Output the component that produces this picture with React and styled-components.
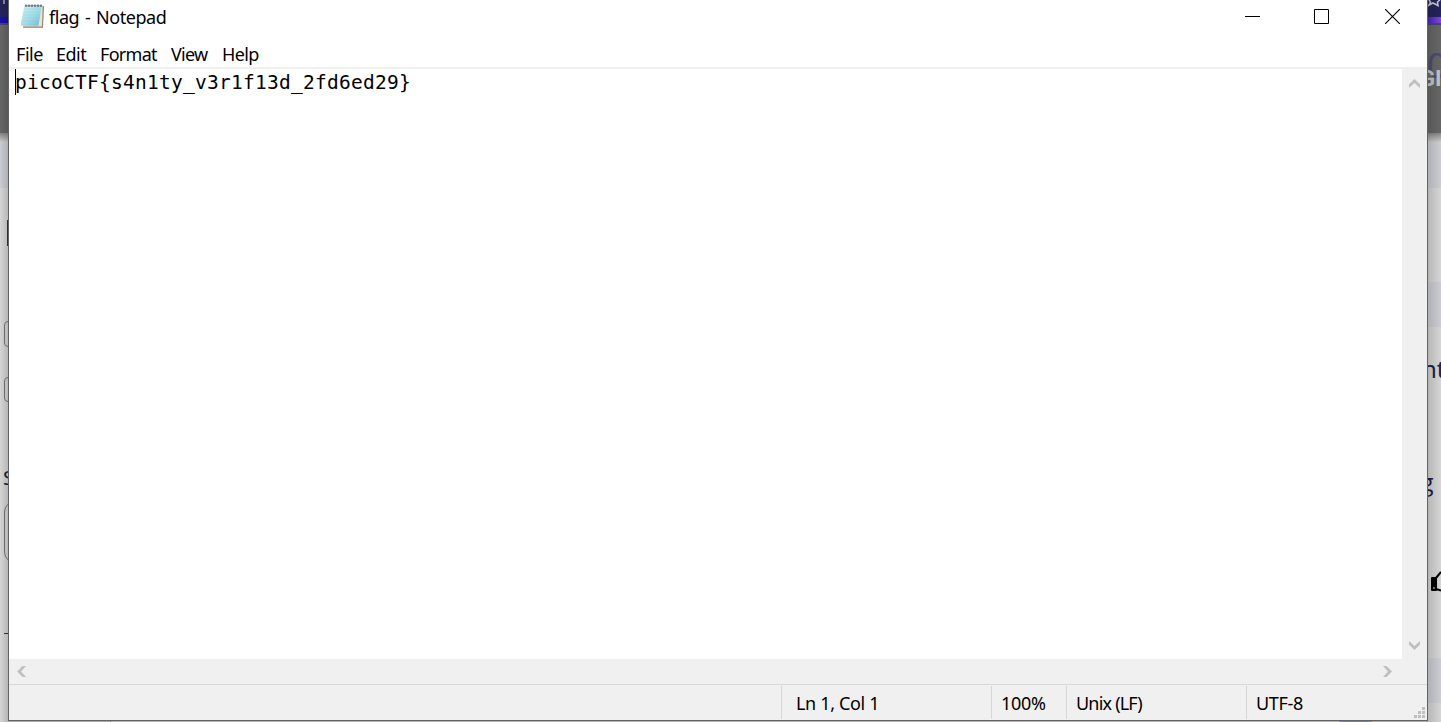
import React from 'react';
import styled, { createGlobalStyle } from 'styled-components';

const Global = createGlobalStyle`
  *, *::before, *::after { box-sizing: border-box; }
  body { margin: 0; overflow: hidden; background: #d3d3d3; }
`;

const ui = `'Noto Sans', 'Open Sans', sans-serif`;

const Desktop = styled.main`
  display: grid;
  grid-template-columns: 8px 1420px 13px;
  width: 1441px;
  height: 722px;
  overflow: hidden;
  font-family: ${ui};
`;

const Strip = styled.aside`
  position: relative;
  display: flex;
  flex-direction: column;
  overflow: hidden;
  background: #d5d5d5;
  &::after {
    content: '';
    position: absolute;
    inset: 0;
    background: linear-gradient(to ${(p) => p.$side}, transparent, rgba(0, 0, 0, 0.14));
  }
`;

const Band = styled.div`
  flex: none;
  height: ${(p) => p.$h}px;
  background: ${(p) => p.$bg || 'transparent'};
`;

const Peek = styled.span`
  position: absolute;
  left: ${(p) => p.$x}px;
  top: ${(p) => p.$y}px;
  color: ${(p) => p.$color || '#1c2145'};
  font-family: ${(p) => p.$font || ui};
  font-size: ${(p) => p.$size}px;
  font-weight: ${(p) => p.$weight || 400};
  line-height: 1;
  white-space: nowrap;
`;

const Outline = styled.span`
  position: absolute;
  left: 4px;
  top: ${(p) => p.$y}px;
  width: 30px;
  height: ${(p) => p.$h}px;
  border: 1px solid #74767c;
  border-radius: ${(p) => p.$r}px;
`;

const Mark = styled.span`
  position: absolute;
  left: ${(p) => p.$x}px;
  top: ${(p) => p.$y}px;
  width: ${(p) => p.$w}px;
  height: ${(p) => p.$h}px;
  background: ${(p) => p.$color || '#33334c'};
`;

const Corner = styled.svg`
  position: absolute;
  left: 0;
  top: 0;
`;

const Thumb = styled.svg`
  position: absolute;
  left: 2px;
  top: 570px;
`;

const Center = styled.div`
  display: flex;
  flex-direction: column;
`;

const Window = styled.section`
  display: flex;
  flex-direction: column;
  height: 721px;
  border: solid #636363;
  border-width: 0 1px 1px;
  background: #fff;
  color: #000;
`;

const Shadow = styled.div`
  height: 1px;
  background: linear-gradient(to right, #aaa 102px, #777 102px 103px, #b5b5b5 103px 1331px, #5790b2 1331px 1364px, #aaa 1364px);
`;

const TitleBar = styled.header`
  display: flex;
  justify-content: space-between;
  height: 37px;
`;

const Title = styled.div`
  display: flex;
  padding-left: 11px;
`;

const TitleText = styled.span`
  padding: 5px 0 0 5px;
  font-size: 18px;
  line-height: 24px;
  letter-spacing: -0.45px;
  word-spacing: 1.5px;
  white-space: nowrap;
`;

const Controls = styled.div`
  display: flex;
  width: 209px;
`;

const Control = styled.button`
  display: flex;
  flex: none;
  width: ${(p) => p.$w}px;
  height: 34px;
  padding: 9px 0 0 ${(p) => p.$pad}px;
  border: 0;
  background: none;
`;

const MenuBar = styled.nav`
  display: flex;
  height: 32px;
  padding: 5px 0 0 7px;
  border-bottom: 2px solid #f0f0f0;
`;

const MenuItem = styled.span`
  flex: none;
  width: ${(p) => p.$w}px;
  font-size: 18px;
  line-height: 24px;
  letter-spacing: ${(p) => p.$ls}px;
  white-space: nowrap;
`;

const Editor = styled.div`
  display: flex;
  height: 590px;
`;

const Document = styled.div`
  position: relative;
  flex: 1;
  padding: 1px 0 0 6px;
  font-family: 'DejaVu Sans Mono', monospace;
  font-size: 19.5px;
  line-height: 26px;
  letter-spacing: 0.26px;
  white-space: pre;
`;

const Caret = styled.span`
  position: absolute;
  left: 6px;
  top: 0;
  width: 1px;
  height: 26px;
  background: #000;
`;

const VScroll = styled.div`
  display: flex;
  flex-direction: column;
  align-items: center;
  justify-content: space-between;
  width: 25px;
  padding: 10px 0 9px;
  background: #f0f0f0;
`;

const HScroll = styled.div`
  display: flex;
  align-items: center;
  justify-content: space-between;
  height: 25px;
  padding: 0 35px 0 8px;
  background: #f0f0f0;
`;

const StatusBar = styled.footer`
  position: relative;
  display: flex;
  justify-content: flex-end;
  height: 36px;
  border-top: 1px solid #d7d7d7;
  background: #f0f0f0;
`;

const Status = styled.div`
  width: ${(p) => p.$w}px;
  height: 33px;
  margin-top: 1px;
  padding: 5px 0 0 ${(p) => p.$pad}px;
  border-left: 1px solid #d7d7d7;
  font-size: 18px;
  line-height: 24px;
  letter-spacing: ${(p) => p.$ls}px;
  white-space: nowrap;
`;

const Grip = styled.svg`
  position: absolute;
  right: 2px;
  bottom: 2px;
`;

function NotepadIcon() {
  return (
    <svg width="24" height="30" viewBox="0 0 24 30">
      <defs>
        <linearGradient id="paper" x1="0" y1="0" x2="1" y2="1">
          <stop offset="0" stopColor="#d8f3f8" />
          <stop offset=".55" stopColor="#a2dbe8" />
          <stop offset="1" stopColor="#69bdd2" />
        </linearGradient>
      </defs>
      <path d="M5 6H24L23 27.8H3Z" fill="#8d8066" />
      <path d="M5 5H22.8L22 26.5H3Z" fill="#e9e3cf" />
      <path d="M4.5 5H21.8L18.5 25.8H.5Z" fill="url(#paper)" />
      <path d="M4 9H20.5M3.6 12H20M3.1 15H19.5M2.6 18H19M2.1 21H18.5" stroke="#84c8d8" strokeWidth=".7" opacity=".4" />
      <path d="M5 5.7H22" stroke="#8fa9b0" strokeWidth="1" />
      <path d="M6 7V4.5M9 7V4.5M12 7V4.5M15 7V4.5M18 7V4.5M21 7V4.5" stroke="#596468" strokeWidth="1.3" />
    </svg>
  );
}

function Chevron({ dir }) {
  const vertical = dir === 'up' || dir === 'down';
  const paths = {
    up: 'M0 5.5 5.5 0 11 5.5V9L5.5 4 0 9Z',
    down: 'M0 0 5.5 5 11 0V3.5L5.5 9 0 3.5Z',
    left: 'M5.5 0H9L4 5.5 9 11H5.5L0 5.5Z',
    right: 'M0 0H3.5L9 5.5 3.5 11H0L5 5.5Z',
  };
  return (
    <svg width={vertical ? 11 : 9} height={vertical ? 9 : 11}>
      <path d={paths[dir]} fill="#bfbfbf" />
    </svg>
  );
}

export default function App() {
  return (
    <Desktop>
      <Global />
      <Strip $side="right">
        <Band $h={17} $bg="#24245b" />
        <Band $h={6} $bg="#1810a8" />
        <Band $h={2} $bg="#45456b" />
        <Band $h={108} $bg="#666" />
        <Band $h={10} $bg="linear-gradient(#858585, #d3d3d3)" />
        <Band $h={45} $bg="#cccdd3" />
        <Mark $x={3} $y={0} $w={2} $h={4} $color="#8888a5" />
        <Mark $x={7} $y={220} $w={1} $h={26} />
        <Outline $y={321} $h={26} $r={4} />
        <Outline $y={377} $h={25} $r={4} />
        <Peek $x={3} $y={468} $size={20}>S</Peek>
        <Outline $y={501} $h={62} $r={11} />
        <Mark $x={4} $y={633} $w={4} $h={1} />
      </Strip>

      <Center>
        <Window>
          <TitleBar>
            <Title>
              <NotepadIcon />
              <TitleText>flag - Notepad</TitleText>
            </Title>
            <Controls>
              <Control $w={69} $pad={27} aria-label="Minimize">
                <svg width="15" height="15"><path d="M0 7.5H15" stroke="#000" /></svg>
              </Control>
              <Control $w={71} $pad={27} aria-label="Maximize">
                <svg width="15" height="15"><path d="M.5.5H14.5V14.5H.5Z" stroke="#000" fill="none" /></svg>
              </Control>
              <Control $w={69} $pad={27} aria-label="Close">
                <svg width="15" height="15"><path d="M0 0 15 15M15 0 0 15" stroke="#000" strokeWidth="1.1" /></svg>
              </Control>
            </Controls>
          </TitleBar>
          <MenuBar>
            <MenuItem $w={40} $ls={-0.45}>File</MenuItem>
            <MenuItem $w={44} $ls={-0.5}>Edit</MenuItem>
            <MenuItem $w={71} $ls={-0.7}>Format</MenuItem>
            <MenuItem $w={51} $ls={-0.75}>View</MenuItem>
            <MenuItem $w={45} $ls={-0.6}>Help</MenuItem>
          </MenuBar>
          <Editor>
            <Document>picoCTF&#123;s4n1ty_v3r1f13d_2fd6ed29&#125;<Caret /></Document>
            <VScroll>
              <Chevron dir="up" />
              <Chevron dir="down" />
            </VScroll>
          </Editor>
          <HScroll>
            <Chevron dir="left" />
            <Chevron dir="right" />
          </HScroll>
          <StatusBar>
            <Status $w={210} $pad={14} $ls={-0.35}>Ln 1, Col 1</Status>
            <Status $w={75} $pad={9} $ls={-0.3}>100%</Status>
            <Status $w={180} $pad={9} $ls={-0.8}>Unix (LF)</Status>
            <Status $w={181} $pad={9} $ls={-0.35}>UTF-8</Status>
            <Grip width="11" height="11" fill="#bfbfbf">
              <path d="M8 0h3v3h-3zM4 4h3v3h-3zM8 4h3v3h-3zM0 8h3v3h-3zM4 8h3v3h-3zM8 8h3v3h-3z" />
            </Grip>
          </StatusBar>
        </Window>
        <Shadow />
      </Center>

      <Strip $side="left">
        <Band $h={17} $bg="#24245b" />
        <Band $h={6} $bg="linear-gradient(to right, #4a25c4, #8049dd)" />
        <Band $h={2} $bg="#45456b" />
        <Band $h={108} $bg="#666" />
        <Band $h={10} $bg="linear-gradient(#858585, #d3d3d3)" />
        <Band $h={45} $bg="#cccdd3" />
        <Band $h={94} />
        <Band $h={45} $bg="#cccdd3" />
        <Band $h={331} />
        <Band $h={45} $bg="#cccdd3" />
        <Corner width="13" height="7">
          <path d="M1 0 2.5 2 1 5 5 3 10 5.5 9.5 2 12 0" stroke="#c4c4d4" strokeWidth="1.6" fill="none" />
        </Corner>
        <Peek $x={-1} $y={47} $size={35} $color="#4d4d70">0</Peek>
        <Peek $x={-8} $y={68} $size={22} $weight={700} $color="#c4c4c4" $font="Roboto, sans-serif">GI</Peek>
        <Peek $x={-6} $y={357} $size={24}>nt</Peek>
        <Peek $x={-7} $y={471} $size={23} $font="'Open Sans', sans-serif">g</Peek>
        <Thumb width="11" height="24" viewBox="0 0 11 24">
          <rect x="1" y="7" width="6" height="14" rx="1" fill="#000" />
          <path d="M6 8 11 2M6 19 11 20.5" stroke="#000" strokeWidth="2" fill="none" />
          <circle cx="4" cy="18" r=".8" fill="#fff" />
        </Thumb>
      </Strip>
    </Desktop>
  );
}
